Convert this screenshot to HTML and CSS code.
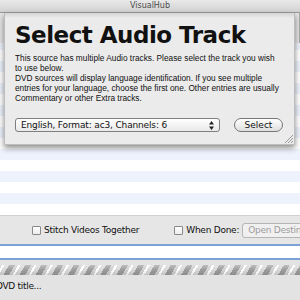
FILE: index.html
```html
<!DOCTYPE html>
<html lang="en">
<head>
    <meta charset="UTF-8">
    <title>Select Audio Track</title>
    <link rel="stylesheet" href="styles.css">
</head>
<body>
    <div class="window">
        <div class="titlebar">VisualHub</div>
        <div class="list">
            <div class="toolbar"></div>
        </div>

        <!-- the sheet shares the list's grid cell and sits over it -->
        <div class="sheet">
            <h1>Select Audio Track</h1>
            <p>This source has multiple Audio tracks. Please select the track you wish<br>to use below.</p>
            <p>DVD sources will display language identification. If you see multiple<br>entries for your language, choose the first one. Other entries are usually<br>Commentary or other Extra tracks.</p>
            <div class="controls">
                <div class="popup">
                    <span>English, Format: ac3, Channels: 6</span>
                    <svg class="arrows" width="5" height="9" viewBox="0 0 5 9">
                        <path d="M2.5 0 L5 3.5 H0 Z M2.5 9 L5 5.5 H0 Z" fill="#222"/>
                    </svg>
                </div>
                <div class="button">Select</div>
            </div>
            <div class="grip-row">
                <svg width="9" height="9" viewBox="0 0 9 9">
                    <path d="M9 1 L1 9 M9 4 L4 9 M9 7 L7 9" stroke="#999" stroke-width="1"/>
                </svg>
            </div>
        </div>

        <div class="options">
            <label class="check"><span class="box"></span>Stitch Videos Together</label>
            <label class="check done"><span class="box"></span>When Done:</label>
            <div class="done-popup">Open Destination</div>
        </div>
        <div class="field"></div>
        <div class="status">
            <div class="barber"></div>
            <div class="status-text">DVD title...</div>
        </div>
    </div>
</body>
</html>
```

FILE: styles.css
```css
body {
    margin: 0;
    font-family: "DejaVu Sans", "Liberation Sans", sans-serif;
    color: #111;
    background: #e2e2e2;
}
.window {
    display: grid;
    grid-template-columns: 300px;
    grid-template-rows: 13px 202px 29px 16px 40px;
    height: 300px;
    overflow: hidden;
}
.titlebar {
    grid-row: 1;
    grid-column: 1;
    border-bottom: 1px solid #9a9a9a;
    background: linear-gradient(#e9e9e9, #d2d2d2);
    color: #4a4a4a;
    font-size: 8px;
    line-height: 12px;
    text-align: center;
}
.list {
    grid-row: 2;
    grid-column: 1;
    background: repeating-linear-gradient(#ffffff 0 4px, #edf2fc 4px 15px, #ffffff 15px 22px);
}
.toolbar {
    height: 30px;
    background: #e4e4e4;
    border-right: 1px solid #aaa;
}
.sheet {
    grid-row: 2;
    grid-column: 1;
    align-self: start;
    justify-self: start;
    z-index: 1;
    margin-left: 4px;
    width: 291px;
    height: 132px;
    box-sizing: border-box;
    padding: 0 0 0 10px;
    display: flex;
    flex-direction: column;
    background: linear-gradient(#d4d4d4, #ebebeb 5px, #ebebeb);
    border: 1px solid #bdbdbd;
    border-top: none;
    box-shadow: 0 3px 6px rgba(0,0,0,0.45);
}
h1 {
    margin: 11px 0 7px 0;
    font-size: 23px;
    line-height: 22px;
    font-weight: bold;
    letter-spacing: -0.5px;
}
p {
    margin: 0;
    font-family: "Liberation Sans", sans-serif;
    font-size: 8.3px;
    line-height: 10px;
    white-space: nowrap;
}
.controls {
    display: flex;
    align-items: center;
    margin-top: 15px;
}
.popup {
    flex: none;
    width: 193px;
    height: 12px;
    padding: 0 5px;
    border: 1px solid #7f7f7f;
    border-radius: 3px;
    background: linear-gradient(#ffffff, #e9e9e9);
    display: flex;
    align-items: center;
    justify-content: space-between;
    font-size: 9px;
    letter-spacing: -0.15px;
}
.button {
    flex: none;
    margin-left: 14px;
    width: 47px;
    height: 12px;
    border: 1px solid #777;
    border-radius: 7px;
    background: linear-gradient(#ffffff, #dedede);
    text-align: center;
    font-size: 9px;
    line-height: 12px;
}
.grip-row {
    margin-top: auto;
    display: flex;
    justify-content: flex-end;
    padding: 0 1px 1px 0;
}
.options {
    grid-row: 3;
    grid-column: 1;
    background: #e6e6e6;
    border-top: 1px solid #d0d0d0;
    display: flex;
    align-items: center;
    padding-left: 32px;
    font-size: 9px;
    letter-spacing: -0.25px;
    white-space: nowrap;
}
.check {
    flex: none;
    display: flex;
    align-items: center;
    gap: 3px;
}
.box {
    width: 7px;
    height: 7px;
    border: 1px solid #8a8a8a;
    border-radius: 1px;
    background: linear-gradient(#ffffff, #ececec);
}
.done {
    margin-left: 35px;
}
.done-popup {
    flex: none;
    margin-left: 3px;
    height: 13px;
    padding: 0 5px;
    border: 1px solid #b5b5b5;
    border-radius: 3px;
    background: #f0f0f0;
    color: #9c9c9c;
    line-height: 13px;
}
.field {
    grid-row: 4;
    grid-column: 1;
    border-top: 2px solid #7aa2d2;
    border-bottom: 2px solid #7aa2d2;
    background: #fff;
}
.status {
    grid-row: 5;
    grid-column: 1;
    background: #e3e3e3;
    padding-top: 5px;
}
.barber {
    height: 10px;
    background:
        linear-gradient(rgba(255,255,255,0.35), rgba(255,255,255,0) 50%, rgba(0,0,0,0.1)),
        repeating-linear-gradient(-60deg, #9c9c9c 0 5px, #d8d8d8 5px 9px, #ffffff 9px 11px, #d0d0d0 11px 14px);
}
.status-text {
    margin: 6px 0 0 -4px;
    font-size: 9px;
    letter-spacing: -0.3px;
}
```
